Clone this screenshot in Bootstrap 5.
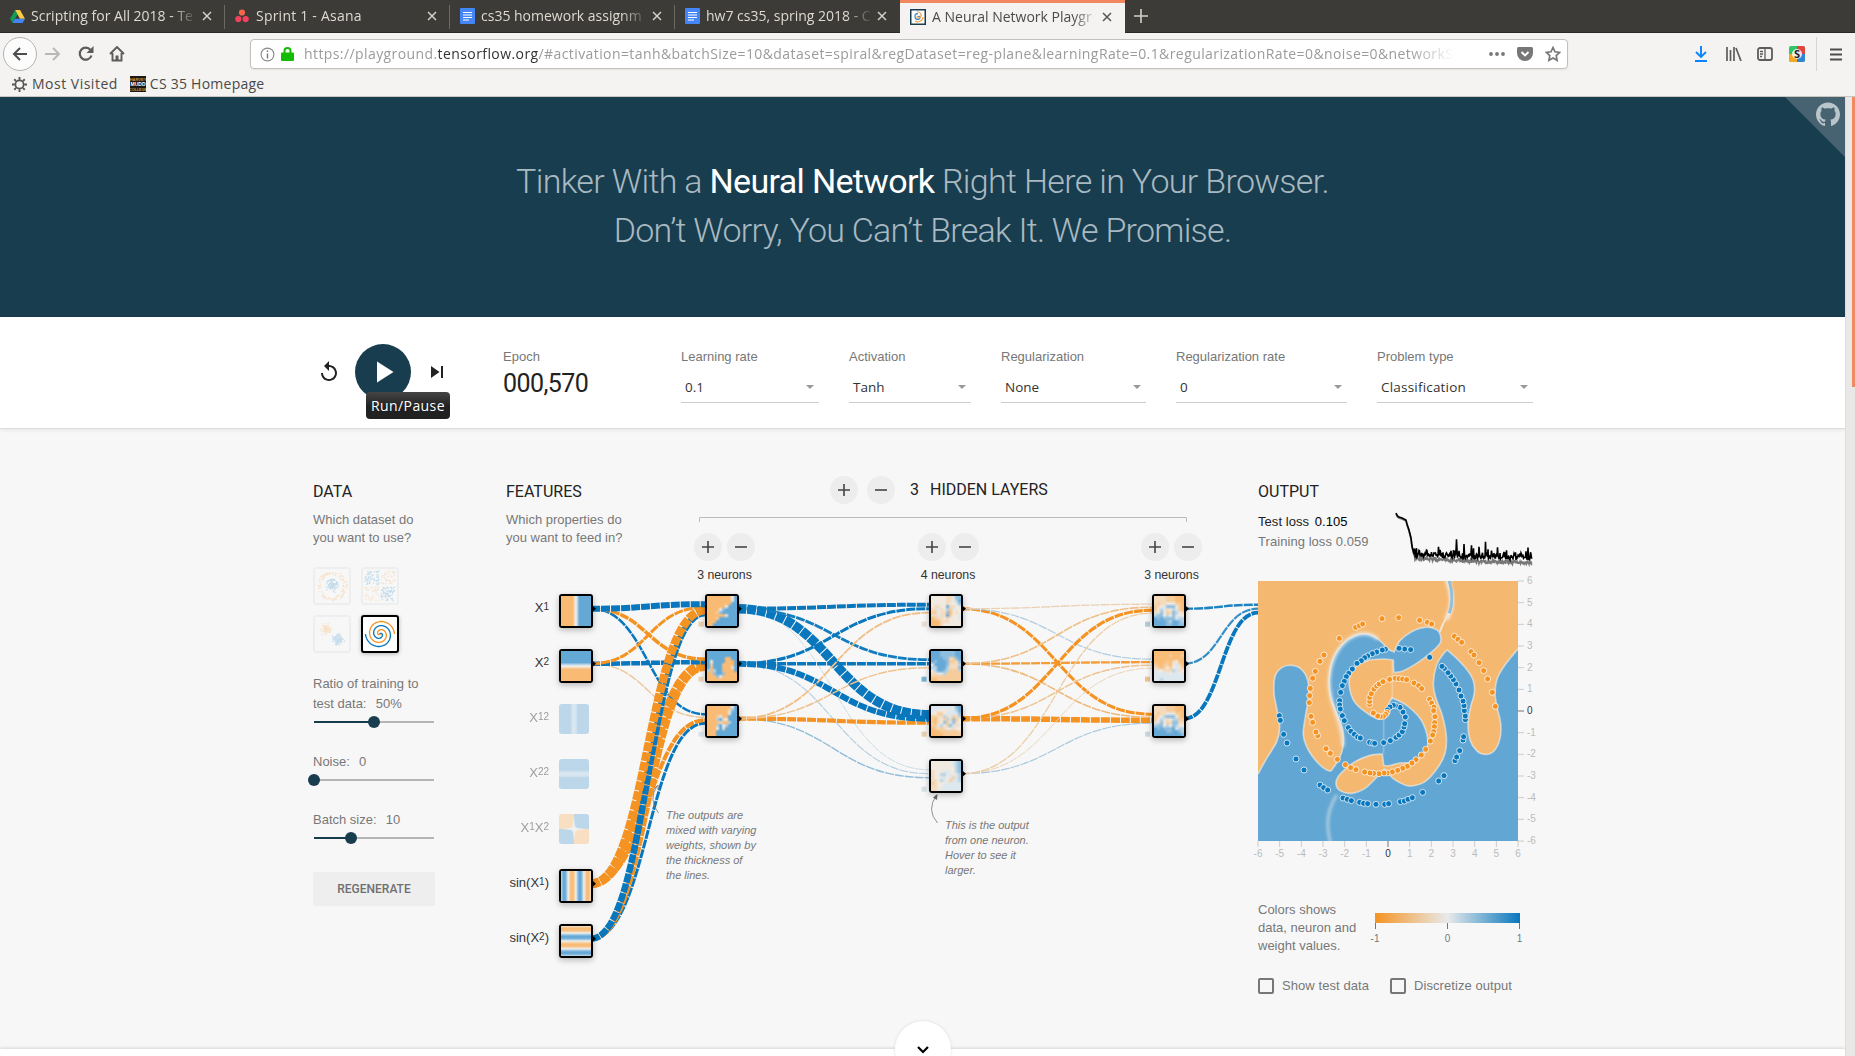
<!DOCTYPE html>
<html lang="en">
<head>
<meta charset="utf-8">
<title>A Neural Network Playground</title>
<link href="https://cdn.jsdelivr.net/npm/bootstrap@5.3.0/dist/css/bootstrap.min.css" rel="stylesheet">
<style>
html,body{height:1056px;overflow:hidden}
body{background:#f7f7f7;font-family:"Liberation Sans",Arial,sans-serif;font-size:13px;line-height:18px;color:#777}
svg{display:block;flex:none}
.ui{font-family:"Open Sans","Noto Sans",sans-serif}
.rb{font-family:Roboto,sans-serif}
/* browser chrome */
.tabstrip{height:33px;background:#3c3b37;border-bottom:1px solid #2a2927;color:#dfdbd2;font-size:14px}
.tab-item{width:225px;height:33px;padding:0 13px 1px 10px;position:relative}
.tab-item+.tab-item::before{content:"";position:absolute;left:-1px;top:5px;height:24px;width:1px;background:#6a6964}
.tab-item.on{background:#f4f3f1;color:#4a4a48;border-top:3px solid #f0875e;padding-top:0;padding-bottom:3px}
.tab-item.on::before{display:none}
.tab-text{width:167px;margin-left:6px;white-space:nowrap;overflow:hidden;-webkit-mask-image:linear-gradient(90deg,#000 84%,transparent);letter-spacing:0}
.toolbar{height:41px;background:#f4f3f1;padding-top:1px}
.backbtn{width:34px;height:34px;border:1px solid #b5b3b0;border-radius:50%;background:#fcfcfc}
.urlbox{width:1318px;height:30px;border:1px solid #c3bfba;border-radius:4px;background:#fff;box-shadow:0 1px 2px #0001;padding-left:9px}
.urltext{width:1151px;font-size:14px;letter-spacing:.41px;color:#9b9b9b;white-space:nowrap;overflow:hidden;-webkit-mask-image:linear-gradient(90deg,#000 96%,transparent)}
.urltext span{color:#333}
.bookbar{height:23px;background:#f4f3f1;border-bottom:1px solid #cbc5c0;font-size:14px;color:#4a4a48;padding:0 0 2px 12px}
.hm-icon{width:16px;height:16px;background:#1c1813;padding-top:1px}
.vline{width:1px;height:34px;background:#d8d5d1}
/* page */
.viewport-wrap{height:959px}
.pagearea{width:1845px;height:959px;overflow:hidden;position:relative}
.track{width:10px;background:#e9e8e7;border-left:1px solid #dedddb}
.thumbbar{width:3px;height:290px;background:#ef8a64}
.hero{height:220px;background:#183d4e;color:#a9b9c1;font-family:Roboto,sans-serif;font-weight:300;font-size:34px;line-height:49px;letter-spacing:-.67px;padding-top:60px;box-shadow:0 1px 4px #0003}
.hero b{font-weight:400;color:#fff}
.hero .second{letter-spacing:-.75px}
.corner{right:0;top:0}
.controls{height:112px;background:#fff;border-bottom:1px solid #dcdcdc;box-shadow:0 1px 4px #00000014}
.inner{width:1220px;margin-left:313px}
.playbtn{width:56px;height:56px;border-radius:50%;background:#183d4e}
.tip{left:53px;top:48px;width:84px;height:27px;border-radius:4px;background:linear-gradient(#454545,#212121 55%);color:#fff;font-size:14px;line-height:27px;letter-spacing:.4px;text-align:center;z-index:3}
.lbl{line-height:16px}
.sel{height:31px;margin-top:7px;border-bottom:1px solid #ccc;color:#333;font-size:13.5px;padding:0 5px 0 4px}
.h-title{font:400 16px/20px Roboto,sans-serif;color:#222;margin:0}
.ds{width:38px;height:38px;border:2px solid #eee;border-radius:3px}
.ds.on{border-color:#000;background:#fff;box-shadow:0 1px 4px #0004}
.ds:not(.on) svg{opacity:.2}
.slide{height:12px;position:relative;width:120px;margin-left:1px;background:linear-gradient(#b5b5b5,#b5b5b5) 0 5px/100% 2px no-repeat}
.slide i{position:absolute;left:0;top:5px;height:2px;background:#183d4e}
.slide i::after{content:"";position:absolute;right:-6px;top:-5px;width:12px;height:12px;border-radius:50%;background:#183d4e}
.regen{width:122px;height:34px;background:#eee;border-radius:2px;font:500 12px/34px Roboto,sans-serif;color:#6f6f6f}
.net{width:752px;height:620px;position:relative}
.net>svg{position:absolute;left:0;top:0}
.rnd{width:28px;height:28px;border-radius:50%;background:#ededed}
.cellbox{position:absolute;width:30px;height:30px;border-radius:3px;overflow:hidden;opacity:.4}
.cellbox canvas{display:block;width:30px;height:30px}
.cellbox.act{box-sizing:content-box;border:2px solid #000;opacity:1;box-shadow:0 2px 6px #0004}
.flabel{position:absolute;left:-30px;width:73px;text-align:right;line-height:16px;opacity:.7;white-space:nowrap}
.flabel.act{color:#333;opacity:1}
.flabel span{font-size:10px;vertical-align:1.5px}
.note{position:absolute;font-style:italic;font-size:11px;line-height:15px;white-space:nowrap}
.layers{position:absolute;left:188px;top:104px;width:508px}
.hidhead{position:absolute;left:324px;top:47px}
.ncount{font:400 12.3px/16px "Liberation Sans",sans-serif;color:#333}
.cbx{width:16px;height:16px;border:2px solid #777;border-radius:2px}
.foot{position:absolute;left:0;right:0;top:952px;height:20px;background:#fff;box-shadow:0 -1px 3px #0002}
.morebtn{position:absolute;left:895px;top:924px;width:56px;height:56px;border-radius:50%;background:#fff;box-shadow:0 0 3px #0002}
.morebtn svg{margin:16px}
</style>
<script src="https://cdn.jsdelivr.net/npm/bootstrap@5.3.0/dist/js/bootstrap.bundle.min.js"></script>
</head>
<body>
<header class="ui">
 <div class="tabstrip d-flex align-items-start">
  <div class="tab-item d-flex align-items-center">
   <svg width="15" height="15" viewBox="0 0 16 16"><path fill="#0f9d58" d="M5.500 1 0 10.500 2.700 15 8.200 5.500z"/><path fill="#ffcd40" d="M5.500 1h5.200L16 10.400h-5.400z"/><path fill="#4285f4" d="M5.300 10.400H16L13.400 15H2.700z"/></svg>
   <div class="tab-text">Scripting for All 2018 - Te</div><svg class="ms-auto" width="10" height="10"><path d="M1 1l8 8M9 1l-8 8" stroke="#d5d1c8" stroke-width="1.500"/></svg></div>
  <div class="tab-item d-flex align-items-center">
   <svg width="14" height="14"><circle cx="7" cy="3.500" r="3.100" fill="#f8654a"/><circle cx="3.300" cy="10" r="3.100" fill="#f2415d"/><circle cx="10.700" cy="10" r="3.100" fill="#f2415d"/></svg>
   <div class="tab-text" style="margin-left:7px;letter-spacing:.22px">Sprint 1 - Asana</div><svg class="ms-auto" width="10" height="10"><path d="M1 1l8 8M9 1l-8 8" stroke="#d5d1c8" stroke-width="1.500"/></svg></div>
  <div class="tab-item d-flex align-items-center">
   <svg width="15" height="16"><rect width="15" height="16" rx="1" fill="#4486f6"/><path d="M3 4.500h9M3 7h9M3 9.500h9M3 12h6" stroke="#fff"/></svg>
   <div class="tab-text">cs35 homework assignm</div><svg class="ms-auto" width="10" height="10"><path d="M1 1l8 8M9 1l-8 8" stroke="#d5d1c8" stroke-width="1.500"/></svg></div>
  <div class="tab-item d-flex align-items-center">
   <svg width="15" height="16"><rect width="15" height="16" rx="1" fill="#4486f6"/><path d="M3 4.500h9M3 7h9M3 9.500h9M3 12h6" stroke="#fff"/></svg>
   <div class="tab-text">hw7 cs35, spring 2018 - C</div><svg class="ms-auto" width="10" height="10"><path d="M1 1l8 8M9 1l-8 8" stroke="#d5d1c8" stroke-width="1.500"/></svg></div>
  <div class="tab-item on d-flex align-items-center">
   <svg width="16" height="16" viewBox="0 0 16 16"><rect x=".75" y=".75" width="14.500" height="14.500" fill="#fff" stroke="#183d4e" stroke-width="1.500"/><path d="M8 8c2-2 3 2 0 2.500-4 0-4-6 0-6" fill="none" stroke="#3d8fc9" stroke-width="1.300"/><path d="M8 7c-2 1-1 3 1 2 4-2 2-6-2-6.500M13 8c0 4-5 6-8 4" fill="none" stroke="#f5a54a" stroke-width="1.200"/></svg>
   <div class="tab-text">A Neural Network Playgr</div><svg class="ms-auto" width="10" height="10"><path d="M1 1l8 8M9 1l-8 8" stroke="#555" stroke-width="1.500"/></svg></div>
  <svg class="ms-2 mt-2" width="16" height="16"><path d="M8 1v14M1 8h14" stroke="#d5d1c8" stroke-width="1.600"/></svg>
 </div>
 <div class="toolbar d-flex align-items-center">
  <div class="backbtn d-flex align-items-center justify-content-center" style="margin-left:3px"><svg width="16" height="14"><path d="M15 7H2M8 1 2 7l6 6" fill="none" stroke="#4d4d4d" stroke-width="2"/></svg></div>
  <svg class="ms-2" width="16" height="14"><path d="M0 7h14M8 1l6 6-6 6" fill="none" stroke="#b9b8b6" stroke-width="2"/></svg>
  <svg width="16" height="16" style="margin-left:17px"><path d="M13.500 9.500A6 6 0 1 1 12.500 4" fill="none" stroke="#5c5c5c" stroke-width="2.200"/><path d="M15.500 0v7h-7z" fill="#5c5c5c"/></svg>
  <svg width="16" height="16" style="margin-left:15px"><path d="M1 8l7-7 7 7M3.500 7v7.500h9V7" fill="none" stroke="#5c5c5c" stroke-width="1.900"/><path d="M6.500 14.500v-5h3v5z" fill="#5c5c5c"/></svg>
  <div class="urlbox d-flex align-items-center" style="margin-left:125px">
   <svg width="15" height="15"><circle cx="7.500" cy="7.500" r="6.400" fill="none" stroke="#888" stroke-width="1.100"/><path d="M7.500 6.500v5M7.500 3.500v1.600" stroke="#777" stroke-width="1.400"/></svg>
   <svg width="13" height="14" style="margin-left:6px"><path d="M3.500 6V4a3 3 0 0 1 6 0v2" fill="none" stroke="#12bc00" stroke-width="2"/><rect y="5.500" width="13" height="8.500" rx="1" fill="#12bc00"/></svg>
   <div class="urltext" style="margin-left:10px">https://playground.<span>tensorflow.org</span>/#activation=tanh&amp;batchSize=10&amp;dataset=spiral&amp;regDataset=reg-plane&amp;learningRate=0.1&amp;regularizationRate=0&amp;noise=0&amp;networkS</div>
   <svg width="16" height="4" style="margin-left:34px"><g fill="#777"><circle cx="2" cy="2" r="1.900"/><circle cx="8" cy="2" r="1.900"/><circle cx="14" cy="2" r="1.900"/></g></svg>
   <svg width="16" height="14" style="margin-left:12px"><path d="M1.500 0h13Q16 0 16 1.500V6a8 8 0 0 1-16 0V1.500Q0 0 1.500 0z" fill="#777"/><path d="M4.500 5 8 8.500 11.500 5" fill="none" stroke="#fff" stroke-width="1.900"/></svg>
   <svg width="16" height="16" style="margin-left:12px" viewBox="0 0 16 16"><path d="M8 1.500l2 4.300 4.700.6-3.500 3.200.9 4.700L8 12l-4.100 2.300.9-4.700L1.300 6.400 6 5.800z" fill="none" stroke="#777" stroke-width="1.700"/></svg>
  </div>
  <svg width="14" height="16" style="margin-left:126px"><path d="M7 0v11M2 6l5 5 5-5M1 15h12" fill="none" stroke="#0a84ff" stroke-width="1.900"/></svg>
  <svg width="16" height="14" style="margin-left:18px"><path d="M1 0v14M4.500 3v11M8 0v14M10 1l5 13" fill="none" stroke="#5c5c5c" stroke-width="1.700"/></svg>
  <svg width="16" height="14" style="margin-left:15px"><rect x="1" y="1" width="14" height="12" rx="2" fill="none" stroke="#5c5c5c" stroke-width="1.800"/><path d="M8 1v12M3 4.500h3M3 7h3M3 9.500h2" stroke="#5c5c5c" stroke-width="1.300"/></svg>
  <svg width="16" height="16" style="margin-left:16px"><rect width="16" height="16" rx="2" fill="#32c66b"/><path d="M8 0h6q2 0 2 2v6H8z" fill="#e2453c"/><path d="M8 8h8v6q0 2-2 2H8z" fill="#3485cf"/><path d="M0 8h8v8H2q-2 0-2-2z" fill="#f2a71d"/><circle cx="8" cy="8" r="5" fill="#fff" fill-opacity=".85"/><text x="8" y="12" text-anchor="middle" font-size="11" font-weight="700" fill="#223">S</text></svg>
  <div class="vline" style="margin-left:11px"></div>
  <svg width="12" height="13" style="margin-left:13px"><path d="M0 1.500h12M0 6.500h12M0 11.500h12" stroke="#4d4d4d" stroke-width="2"/></svg>
 </div>
 <div class="bookbar d-flex align-items-center">
  <svg width="15" height="15" viewBox="-8 -8 16 16"><circle r="4.400" fill="none" stroke="#555" stroke-width="1.800"/><path d="M0-8v3M0 8V5M-8 0h3M8 0H5M-5.600-5.600l2 2M5.600 5.600l-2-2M-5.600 5.600l2-2M5.600-5.600l-2 2" stroke="#555" stroke-width="2"/></svg>
  <span style="margin-left:5px;letter-spacing:.5px">Most Visited</span>
  <div class="hm-icon" style="margin-left:12px"><svg width="16" height="14" font-family="Liberation Sans" font-weight="700" text-anchor="middle"><text x="8" y="4" font-size="4" fill="#c99b3e">HARVEY</text><text x="8" y="9" font-size="5" fill="#fff">MUDD</text><text x="8" y="13.500" font-size="3.600" fill="#c99b3e">COLLEGE</text></svg></div>
  <span style="margin-left:4px;letter-spacing:.25px">CS 35 Homepage</span>
 </div>
</header>
<div class="viewport-wrap d-flex">
<div class="pagearea">
 <div class="hero text-center"><div>Tinker With a <b>Neural Network</b> Right Here in Your Browser.</div><div class="second">Don’t Worry, You Can’t Break It. We Promise.</div></div>
 <svg class="corner position-absolute" width="60" height="60"><path d="M0 0h60v60z" fill="#476371"/><g transform="translate(31 5.500) scale(1.500)"><path fill="#b9c5cb" d="M8 0C3.580 0 0 3.580 0 8c0 3.540 2.290 6.530 5.470 7.590.4.070.55-.17.55-.38 0-.19-.01-.82-.01-1.490-2.010.37-2.530-.49-2.690-.94-.09-.23-.48-.94-.82-1.130-.28-.15-.68-.52-.01-.53.63-.01 1.080.58 1.230.82.72 1.210 1.870.87 2.330.66.070-.52.280-.87.510-1.070-1.780-.2-3.640-.89-3.640-3.950 0-.87.310-1.590.820-2.150-.08-.2-.36-1.020.080-2.120 0 0 .67-.21 2.200.82.640-.18 1.320-.27 2-.27.680 0 1.360.09 2 .27 1.530-1.040 2.200-.82 2.200-.82.440 1.100.160 1.920.080 2.120.510.56.820 1.270.820 2.150 0 3.070-1.870 3.750-3.650 3.950.290.25.540.73.540 1.480 0 1.070-.01 1.930-.01 2.200 0 .21.150.46.550.38A8.013 8.013 0 0 0 16 8c0-4.420-3.580-8-8-8z"/></g></svg>
 <div class="controls">
  <div class="inner d-flex pt-4 position-relative">
   <div class="d-flex align-items-center position-relative" style="width:190px;height:56px;margin-top:3px">
    <svg class="ms-1" width="24" height="24" viewBox="0 0 24 24"><path fill="#222" d="M12 5V1L7 6l5 5V7c3.310 0 6 2.690 6 6s-2.690 6-6 6-6-2.690-6-6H4c0 4.420 3.580 8 8 8s8-3.580 8-8-3.580-8-8-8z"/></svg>
    <div class="playbtn d-flex align-items-center justify-content-center" style="margin-left:14px"><svg width="36" height="36" viewBox="0 0 24 24"><path fill="#fff" d="M8 5v14l11-7z"/></svg></div>
    <svg width="24" height="24" viewBox="0 0 24 24" style="margin-left:14px"><path fill="#222" d="M6 18l8.500-6L6 6v12zM16 6v12h2V6h-2z"/></svg>
    <div class="tip ui position-absolute">Run/Pause</div>
   </div>
   <div class="mt-2" style="width:178px"><div class="lbl">Epoch</div><div class="rb" style="font-size:25px;line-height:37px;letter-spacing:-.55px;color:#222">000,570</div></div>
   <div class="mt-2" style="width:138px;margin-right:30px"><div class="lbl">Learning rate</div><div class="sel ui d-flex align-items-center justify-content-between"><span>0.1</span><svg width="8" height="4"><path d="M0 0h8l-4 4z" fill="#999"/></svg></div></div>
   <div class="mt-2" style="width:122px;margin-right:30px"><div class="lbl">Activation</div><div class="sel ui d-flex align-items-center justify-content-between"><span>Tanh</span><svg width="8" height="4"><path d="M0 0h8l-4 4z" fill="#999"/></svg></div></div>
   <div class="mt-2" style="width:145px;margin-right:30px"><div class="lbl">Regularization</div><div class="sel ui d-flex align-items-center justify-content-between"><span>None</span><svg width="8" height="4"><path d="M0 0h8l-4 4z" fill="#999"/></svg></div></div>
   <div class="mt-2" style="width:171px;margin-right:30px"><div class="lbl">Regularization rate</div><div class="sel ui d-flex align-items-center justify-content-between"><span>0</span><svg width="8" height="4"><path d="M0 0h8l-4 4z" fill="#999"/></svg></div></div>
   <div class="mt-2" style="width:156px"><div class="lbl">Problem type</div><div class="sel ui d-flex align-items-center justify-content-between"><span style="letter-spacing:.2px">Classification</span><svg width="8" height="4"><path d="M0 0h8l-4 4z" fill="#999"/></svg></div></div>
  </div>
 </div>
 <main class="inner d-flex">
  <section style="width:193px;padding-top:53px">
   <h2 class="h-title">DATA</h2>
   <div style="margin-top:9px">Which dataset do<br>you want to use?</div>
   <div class="d-flex flex-wrap" style="width:96px;gap:10px;margin-top:20px">
    <div class="ds"><svg id="d0" width="34" height="34"></svg></div><div class="ds"><svg id="d1" width="34" height="34"></svg></div>
    <div class="ds"><svg id="d2" width="34" height="34"></svg></div><div class="ds on"><svg id="d3" width="34" height="34"></svg></div>
   </div>
   <div style="line-height:20px;margin-top:21px">Ratio of training to<br>test data:&nbsp;&nbsp;<span class="ps-1" style="margin-left:-2px">50%</span></div>
   <div class="slide" style="margin-top:2px"><i style="width:50%"></i></div>
   <div style="line-height:20px;margin-top:24px">Noise:&nbsp;&nbsp;<span class="ps-1" style="margin-left:-2px">0</span></div>
   <div class="slide" style="margin-top:2px"><i style="width:0%"></i></div>
   <div style="line-height:20px;margin-top:24px">Batch size:&nbsp;&nbsp;<span class="ps-1" style="margin-left:-2px">10</span></div>
   <div class="slide" style="margin-top:2px"><i style="width:31%"></i></div>
   <div class="regen text-center" style="margin-top:28px">REGENERATE</div>
  </section>
  <section class="net" id="net">
   <svg id="links" width="752" height="620" viewBox="506 429 752 620" fill="none"></svg>
   <div style="padding-top:53px"><h2 class="h-title">FEATURES</h2><div style="margin-top:9px">Which properties do<br>you want to feed in?</div></div>
   <div class="hidhead d-flex align-items-center">
    <div class="rnd d-flex align-items-center justify-content-center"><svg width="12" height="12"><path d="M6 0v12M0 6h12" stroke="#444" stroke-width="1.600"/></svg></div>
    <div class="rnd d-flex align-items-center justify-content-center" style="margin-left:9px"><svg width="12" height="12"><path d="M0 6h12" stroke="#444" stroke-width="1.600"/></svg></div>
    <h2 class="h-title" style="margin-left:15px">3</h2><h2 class="h-title" style="margin-left:11px">HIDDEN LAYERS</h2>
   </div>
   <div class="layers d-flex justify-content-between" id="layers"></div>
   <div class="note" style="left:160px;top:379px">The outputs are<br>mixed with varying<br>weights, shown by<br>the thickness of<br>the lines.</div>
   <div class="note" style="left:439px;top:389px">This is the output<br>from one neuron.<br>Hover to see it<br>larger.</div>
  </section>
  <section style="width:275px;padding-top:53px">
   <h2 class="h-title">OUTPUT</h2>
   <div class="d-flex justify-content-between" style="height:79px">
    <div style="line-height:20px;margin-top:10px;letter-spacing:.06px"><div style="color:#222">Test loss <span class="text-black ps-1" style="margin-left:-2px">0.105</span></div><div>Training loss 0.059</div></div>
    <svg id="loss" width="138" height="60" viewBox="1396 508 138 60" fill="none" style="margin-top:6px"></svg>
   </div>
   <svg id="plot" class="overflow-visible" width="290" height="290" viewBox="1253 581 290 290" style="margin-left:-5px;font-family:'Liberation Sans'"></svg>
   <div class="d-flex" style="margin-top:30px">
    <div style="width:110px">Colors shows<br>data, neuron and<br>weight values.</div>
    <svg width="160" height="50" viewBox="1368 900 160 50" font-size="10"><defs><linearGradient id="lg"><stop stop-color="#f59322"/><stop offset=".5" stop-color="#e8eaeb"/><stop offset="1" stop-color="#0877bd"/></linearGradient></defs><rect x="1375" y="912" width="145" height="10" fill="url(#lg)"/><path d="M1375.500 922v6M1447.500 922v6M1519.500 922v6" stroke="#777"/><g fill="#777" text-anchor="middle"><text x="1375" y="941">-1</text><text x="1447.500" y="941">0</text><text x="1519.500" y="941">1</text></g></svg>
   </div>
   <div class="d-flex align-items-center" style="margin-top:22px;white-space:nowrap;letter-spacing:.07px"><div class="cbx"></div><span style="margin-left:8px">Show test data</span><div class="cbx" style="margin-left:21px"></div><span style="margin-left:8px">Discretize output</span></div>
  </section>
 </main>
 <div class="foot"></div>
 <div class="morebtn"><svg width="24" height="24" viewBox="0 0 24 24"><path d="M7 10l5 5 5-5" fill="none" stroke="#000" stroke-width="2.200"/></svg></div>
</div>
<div class="track d-flex justify-content-end"><div class="thumbbar"></div></div>
</div>
<script>
const $=id=>document.getElementById(id);
let seed=7;const rnd=()=>(seed=(seed*16807)%2147483647)/2147483647;
const mix=(a,b,t)=>a.map((v,i)=>Math.round(v+(b[i]-v)*t));
function ramp(v,O,M,B){v=Math.max(-1,Math.min(1,v));return 'rgb('+(v<0?mix(M,O,-v):mix(M,B,v)).join()+')';}
const wcol=v=>ramp(v,[245,147,34],[232,234,235],[8,119,189]);
const hcol=v=>ramp(v,[249,187,116],[240,241,242],[100,168,214]);

/* connections: one list per target node, in input order, [width, colour value] */
const rowY=i=>608.7+55*i;
const stages=[
 {sx:591,tx:705,src:[0,1,5,6],dst:[
  [[6,1],[3,-1],[8.5,-1],[6.5,1]],
  [[3.5,-1],[4.5,1],[9,-1],[5.5,-1]],
  [[2.5,1],[1.5,-.4],[4,-1],[3,1]]]},
 {sx:737,tx:929,src:[0,1,2],dst:[
  [[4,1],[3,1],[1.8,-.5]],
  [[2.8,.95],[3.6,1],[1.5,-.45]],
  [[9.5,1],[6,1],[4.2,-1]],
  [[1,.12],[1.1,.25],[1.4,.4]]]},
 {sx:961,tx:1152,src:[0,1,2,3],dst:[
  [[1.3,-.3],[1.6,-.5],[3.2,-1],[1.3,-.35]],
  [[1.2,.25],[2.3,-.9],[1.5,-.45],[1,-.25]],
  [[3,-1],[1.6,-.55],[5.5,-1],[1.2,.28]]]},
 {sx:1184,tx:1258,src:[0,1,2],dst:[[[2.4,.9],[2.2,.8],[3.8,1]]]}];
let s='';
stages.forEach(g=>g.dst.forEach((ins,d)=>{const n=ins.length;ins.forEach((l,k)=>{
 const a=rowY(g.src[k]),b=rowY(d)+(k-(n-1)/2)/n*12,m=(g.sx+g.tx)/2;
 s=`<path d="M${g.sx} ${a}C${m} ${a} ${m} ${b} ${g.tx} ${b}" stroke="${wcol(l[1])}" stroke-width="${l[0]}" stroke-dasharray="9 1"/>`+s;});}));
s+='<path d="M699.500 522v-4.500H1186.500V522" stroke="#bbb"/>';
s+='<g stroke="#777" stroke-width=".8"><path d="M658.500 813Q648 800 657 786M654 789l4-4v5"/><path d="M937.500 823Q926 810 936.500 795"/></g><path d="M933 797.500l4.500-3.500-.5 6z" fill="#666"/>';
[[593,[0,1,5,6]],[739,[0,1,2]],[963,[0,1,2,3]],[1186,[0,1,2]]].forEach(([x,r])=>r.forEach(i=>{s+=`<path d="M${x-1} ${rowY(i)-3.5}l4 3.500-4 3.500z" fill="#000"/>`;}));
[[698.500,[-.3,-.25,.05]],[921.500,[-.12,.5,-.3,.08]],[1145,[.25,-.45,.15]]].forEach(([x,v])=>v.forEach((b,i)=>{s+=`<rect x="${x}" y="${rowY(i)+13}" width="5" height="5" fill="${wcol(b)}"/>`;}));
$('links').innerHTML=s;

/* activation thumbnails, 10 samples a side */
function cell(x,row,fn,act){
 const d=document.createElement('div');d.className='cellbox'+(act?' act':'');d.style.left=(x-506)+'px';d.style.top=(594+55*row-429)+'px';
 const c=document.createElement('canvas'),N=fn.n||10;c.width=c.height=N;const g=c.getContext('2d');
 for(let j=0;j<N;j++)for(let i=0;i<N;i++){g.fillStyle=hcol(fn(i,j));g.fillRect(i,j,1,1);}
 d.append(c);$('net').append(d);}
const P=(i)=>-6+12*(i+.5)/30;
const feats=[['X<span>1</span>',(x,y)=>x/1.4,1],['X<span>2</span>',(x,y)=>y/1.4,1],['X<span>12</span>',(x,y)=>.45+x*x/4,0],['X<span>22</span>',(x,y)=>.45+y*y/4,0],['X<span>1</span>X<span>2</span>',(x,y)=>x*y,0],['sin(X<span>1</span>)',(x,y)=>Math.sin(x),1],['sin(X<span>2</span>)',(x,y)=>Math.sin(y),1]];
feats.forEach((f,r)=>{const fn=(i,j)=>f[1](P(i),-P(j));fn.n=30;cell(559,r,fn,f[2]);
 const l=document.createElement('div');l.className='flabel'+(f[2]?' act':'');l.innerHTML=f[0];l.style.top=(599+55*r-429)+'px';$('net').append(l);});
const maps={705:[
'0000000049 0000000059 0000000099 0000004999 0000479999 0002799999 0000005999 0002999999 0019999999 0099999999',
'9999999999 9999999999 9999991199 9499990009 9299910009 9199900059 6069900009 0079970000 0007500000 0000000000',
'0000000059 0000000379 0000000599 0002500999 0006834999 0001300699 0006946999 0004939999 0019999999 0019999999'],
929:['4444433577 4444433468 4444434457 4334483345 3353462544 2243371434 3353382445 1233434445 0013334444 0013444444',
'8887777788 8887777788 8888773278 8798872237 5898873336 6699863337 5688762226 3355622222 2222222222 1122222222',
'5555555578 5544445568 4422455557 2233635236 2034263724 2134725734 2256427535 1232345344 0012222223 0011222222',
'4444444567 4444444567 4444444467 3444554467 3446645456 3445545256 3346542556 2344455555 3344555555 3345555555'],
1152:['3333222100 3333222110 3233444220 2345777421 2465346521 3574237643 6774647544 8787777566 8888768876 8888778877',
'1111111111 1111121112 1111110111 1101213411 2102204531 3212424542 5443336534 5555545545 5555555555 5565555555',
'3333222100 3333222110 3233454220 2346777421 2465346622 3574237733 6774647644 8787778566 8888778876 8889988887']};
for(const x in maps)maps[x].forEach((m,r)=>{const R=m.split(' ');cell(+x,r,(i,j)=>(+R[j][i]-4.5)/3.6,1);});
$('layers').innerHTML=[3,4,3].map(n=>`<div class="text-center" style="width:61px"><div class="d-flex justify-content-between"><div class="rnd d-flex align-items-center justify-content-center"><svg width="12" height="12"><path d="M6 0v12M0 6h12" stroke="#444" stroke-width="1.600"/></svg></div><div class="rnd d-flex align-items-center justify-content-center"><svg width="12" height="12"><path d="M0 6h12" stroke="#444" stroke-width="1.600"/></svg></div></div><div class="ncount" style="margin-top:6px">${n} neurons</div></div>`).join('');

/* dataset thumbnails */
const dot=(x,y,c)=>`<rect x="${(x-.6).toFixed(1)}" y="${(y-.6).toFixed(1)}" width="1.300" height="1.300" fill="${c}"/>`,OR='#f59322',BL='#0877bd';
let t='';for(let i=0;i<110;i++){let a=rnd()*6.283,r=rnd()*7;t+=dot(17+r*Math.cos(a),17+r*Math.sin(a),BL);a=rnd()*6.283;r=11+rnd()*4;t+=dot(17+r*Math.cos(a),17+r*Math.sin(a),OR);}$('d0').innerHTML=t;
t='';for(let i=0;i<220;i++){const x=(rnd()-.5)*30,y=(rnd()-.5)*30;if(Math.abs(x)>1&&Math.abs(y)>1)t+=dot(17+x,17+y,x*y>0?BL:OR);}$('d1').innerHTML=t;
t='';for(let i=0;i<90;i++){const q=()=>(rnd()+rnd()+rnd()+rnd()-2)*4;t+=dot(11+q(),12+q(),OR)+dot(23+q(),22.5+q(),BL);}$('d2').innerHTML=t;
t='';for(let k=0;k<2;k++){let p='';for(let i=0;i<=150;i++){const a=1.75*i/150*2*Math.PI+k*Math.PI,r=i/150*14.5;p+=(i?'L':'M')+(17+r*Math.sin(a)).toFixed(1)+' '+(17-r*Math.cos(a)).toFixed(1);}t+=`<path d="${p}" fill="none" stroke="${k?OR:BL}" stroke-width="1.300"/>`;}$('d3').innerHTML=t;

/* output plot; contour and samples are in thirds of a pixel */
function curve(p){let d='M'+p[0];for(let i=0;i<p.length-1;i++){const a=p[Math.max(0,i-1)],b=p[i],c=p[i+1],e=p[Math.min(p.length-1,i+2)];d+=`C${b[0]+(c[0]-a[0])/6} ${b[1]+(c[1]-a[1])/6} ${c[0]-(e[0]-b[0])/6} ${c[1]-(e[1]-b[1])/6} ${c[0]} ${c[1]}`;}return d;}
const pts=q=>q.trim().split(' ').map(v=>v.split(',').map(Number));
const segs=['54,912 80,865 110,815 119,770 110,715 102,670 105,620 125,593 155,586 183,597 203,630 206,680 196,740 190,795 205,840 235,880 268,903 280,893',
'280,893 298,865 309,830 308,780 290,730 272,680 268,625 280,565 310,520 345,497 380,492 415,508 445,537 462,546',
'462,546 480,512 515,485 555,472 590,479 601,495 600,520 570,550 530,580 490,602 464,608','464,608 461,600 460,570','460,570 430,567 385,571 350,588 331,615 328,650 343,695 375,725 410,745 435,742 444,722 447,700 456,683',
'456,683 500,706 540,745 560,790 562,830 545,858 520,879','520,879 480,879 448,887 431,886','431,886 427,852','427,852 390,856 340,878 300,913 288,940 300,962 335,970 375,955 410,922 433,897',
'433,897 460,926 490,943 515,948 555,935 592,895 615,850 619,800 608,740 588,685 580,640 590,585 610,552 622,540','622,540 650,565 680,598 700,632 703,670 692,710 684,760 690,810 710,842 735,853 762,843 780,805 782,760 772,715 765,670 772,625 797,582 838,532'];
const contour=segs.map((g,i)=>{const d=curve(pts(g));return i?d.replace(/^M[^C]*/,''):d;}).join('');
const blue=pts('118,737 121,751 131,793 141,819 168,867 192,900 240,945 251,953 263,960 309,984 322,988 334,992 359,997 371,1000 383,1001 408,1003 434,1003 446,1001 481,995 493,993 504,988 517,983 548,967 596,933 612,917 645,872 650,861 659,842 669,810 671,800 676,749 676,738 673,722 672,707 669,693 663,678 657,660 648,642 640,629 632,618 624,608 613,595 606,589 569,562 512,539 494,537 477,535 436,538 427,540 410,546 397,551 383,558 374,563 364,572 351,580 337,597 326,610 319,620 313,634 307,647 302,667 299,692 299,705 301,717 307,737 313,752 325,773 333,784 343,793 353,801 361,804 389,817 398,819 404,820 431,818 451,812 468,802 477,795 487,785 492,771 494,761 496,741 489,726 480,712 466,707 460,706 450,711 442,720');
const oran=pts('441,727 437,733 430,739 421,740 413,738 400,729 389,703 389,694 389,682 394,671 402,657 410,648 417,642 429,635 449,628 466,625 477,626 488,627 500,629 522,639 536,647 545,656 569,688 575,699 582,711 581,722 585,740 584,758 583,770 581,785 578,795 571,813 557,838 544,855 528,869 516,879 502,889 488,895 473,901 457,906 441,909 432,909 417,911 401,910 390,909 374,906 348,899 332,893 316,884 292,868 271,850 258,836 233,797 228,786 218,757 213,739 208,698 209,677 211,655 218,625 226,604 240,574 252,555 298,505 347,472 358,467 368,462 426,446 476,443 539,451 562,457 575,462 643,499 654,508 665,517 693,545 702,555 717,578 731,602 743,627 757,667 766,709');
let o=`<defs><filter id="bl" x="-10%" y="-10%" width="120%" height="120%"><feGaussianBlur stdDeviation="1.500"/></filter><filter id="bl2" x="-50%" y="-10%" width="200%" height="120%"><feGaussianBlur stdDeviation="4"/></filter></defs>
<svg x="1258" y="581" width="260" height="260" viewBox="54 333 780 780"><rect x="54" y="333" width="780" height="780" fill="#f5b871"/>
<path d="${contour}L850 1150H40V912z" fill="#62a6d3"/><path d="${contour}" fill="none" stroke="#edf0f0" stroke-width="5" stroke-opacity=".6" filter="url(#bl)"/>
<path d="M620 325Q650 400 618 448" fill="none" stroke="#f3ece2" stroke-width="14" filter="url(#bl2)"/><path d="M625 325Q645 385 628 430" fill="none" stroke="#92bfdc" stroke-width="9" filter="url(#bl)"/><path d="M618 445Q606 465 600 485" fill="none" stroke="#f3e4d0" stroke-width="6" filter="url(#bl)"/>
<path d="M272 1120Q248 1040 290 975" fill="none" stroke="#d5e2ea" stroke-opacity=".7" stroke-width="8" filter="url(#bl2)"/>
<path d="M457 575V690M431 750V850" stroke="#fff" stroke-opacity=".25" stroke-width="5" filter="url(#bl)"/>
<path d="M309 830C312 760 262 700 268 625 275 520 360 460 415 508" fill="none" stroke="#eef1f2" stroke-opacity=".75" stroke-width="10" filter="url(#bl2)"/>`;
[[blue,BL],[oran,OR]].forEach(([a,c])=>a.forEach(p=>{o+=`<circle cx="${p[0]}" cy="${p[1]}" r="9" fill="${c}" stroke="#fff" stroke-opacity=".8" stroke-width="2.800"/>`;}));
o+='</svg><g font-size="10">';
for(let v=-6;v<=6;v++){const p=260*(v+6)/12,x=1258+p,y=841-p,c=v?'#bbb':'#333',k=v?'#ccc':'#777';
 o+=`<path d="M${x} 841v6M1518 ${y}h6" stroke="${k}"/><text x="${x}" y="857" text-anchor="middle" fill="${c}">${v}</text><text x="1527" y="${y+3}" fill="${c}">${v}</text>`;}
$('plot').innerHTML=o+'</g>';

/* loss history */
let a='M1397 513l1.500 3',b='M1397 514l1.500 3';
[[1400,517],[1403,518],[1407,520],[1408,524],[1410,530],[1412,538],[1413,546],[1415,554]].forEach(p=>{a+='L'+p;b+='L'+p[0]+' '+(p[1]+1);});
for(let x=1415.5;x<=1533;x+=.5){const q=(x-1415)/118,sp=[[1439.5,10],[1457.5,20],[1465,15],[1472.5,13],[1486.5,17],[1498.5,12],[1507.5,10],[1529,9],[1480,8]].find(e=>e[0]===x);
 a+=`L${x} ${(555+q*2.5-(sp?sp[1]-2:0)-rnd()*rnd()*9+rnd()*3).toFixed(1)}`;b+=`L${x} ${(557+Math.sqrt(q)*6+(rnd()-.5)*4).toFixed(1)}`;}
$('loss').innerHTML=`<path d="${b}" stroke="#777" stroke-width="1.700"/><path d="${a}" stroke="#000" stroke-width="1.600"/>`;
</script>
</body>
</html>
